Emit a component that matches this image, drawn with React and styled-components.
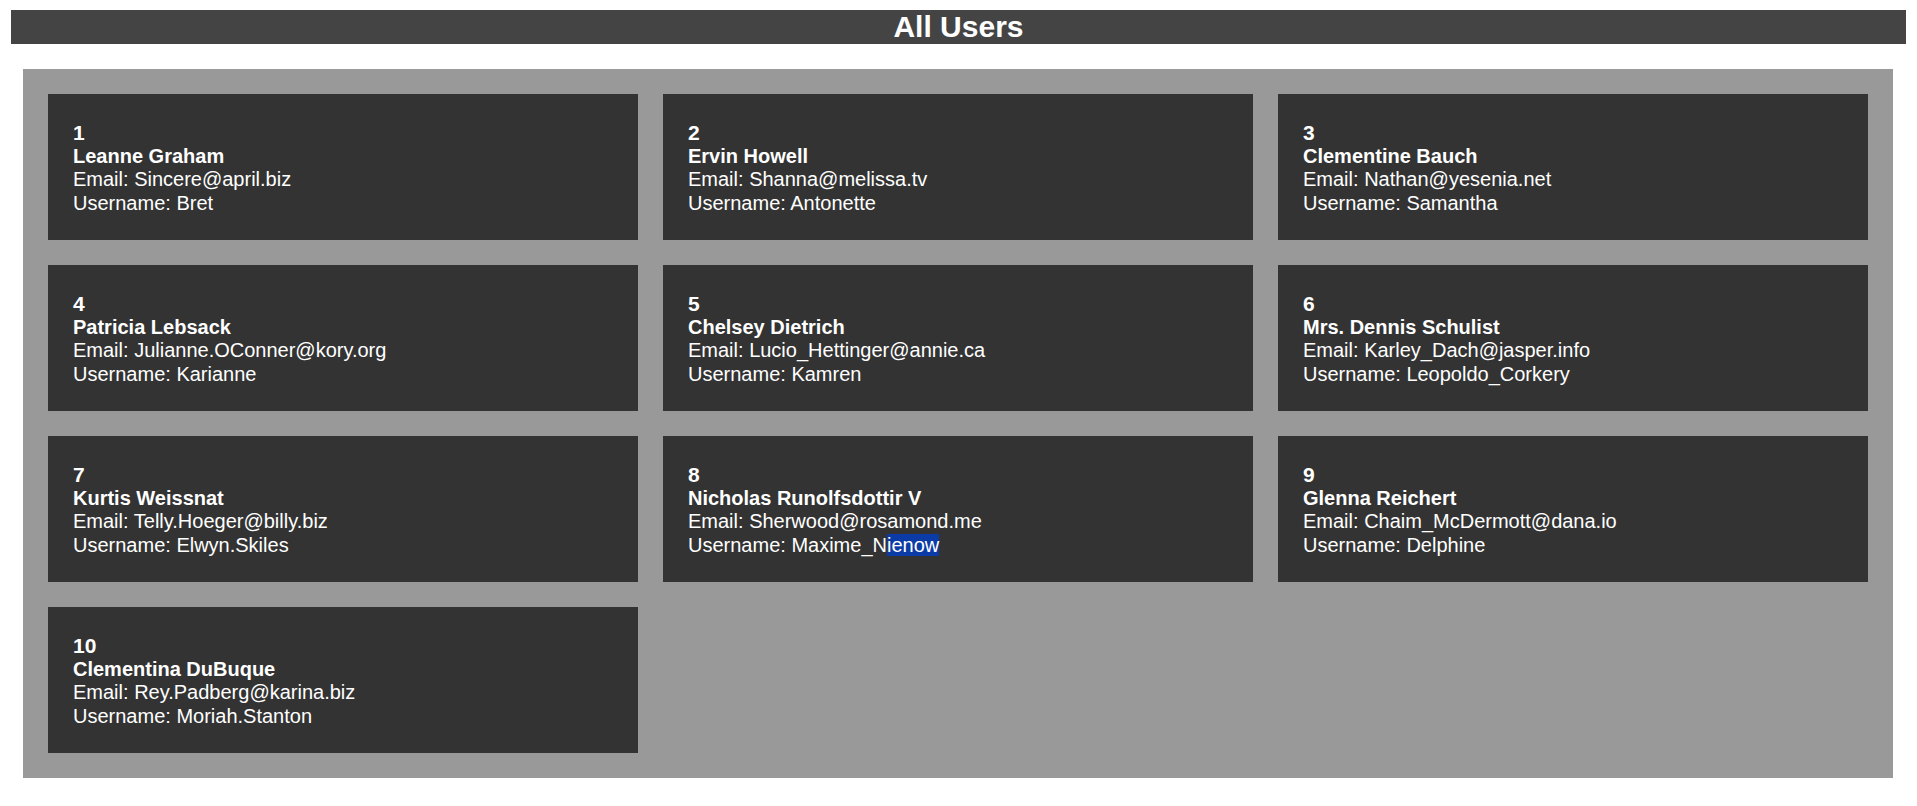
import styled, { createGlobalStyle } from "styled-components";

const users = [
  { id: 1, name: "Leanne Graham", email: "Sincere@april.biz", username: "Bret" },
  { id: 2, name: "Ervin Howell", email: "Shanna@melissa.tv", username: "Antonette" },
  { id: 3, name: "Clementine Bauch", email: "Nathan@yesenia.net", username: "Samantha" },
  { id: 4, name: "Patricia Lebsack", email: "Julianne.OConner@kory.org", username: "Karianne" },
  { id: 5, name: "Chelsey Dietrich", email: "Lucio_Hettinger@annie.ca", username: "Kamren" },
  { id: 6, name: "Mrs. Dennis Schulist", email: "Karley_Dach@jasper.info", username: "Leopoldo_Corkery" },
  { id: 7, name: "Kurtis Weissnat", email: "Telly.Hoeger@billy.biz", username: "Elwyn.Skiles" },
  { id: 8, name: "Nicholas Runolfsdottir V", email: "Sherwood@rosamond.me", username: "Maxime_Nienow", selected: 8 },
  { id: 9, name: "Glenna Reichert", email: "Chaim_McDermott@dana.io", username: "Delphine" },
  { id: 10, name: "Clementina DuBuque", email: "Rey.Padberg@karina.biz", username: "Moriah.Stanton" },
];

const GlobalStyle = createGlobalStyle`
  body {
    margin: 0;
    background: #ffffff;
    font-family: "Liberation Sans", Arial, sans-serif;
  }
`;

const Page = styled.div`
  padding: 10px 11px;
`;

const Title = styled.h1`
  margin: 0;
  height: 34px;
  line-height: 34px;
  background-color: #444444;
  color: #ffffff;
  font-size: 30px;
  font-weight: 700;
  text-align: center;
`;

const Board = styled.div`
  margin: 25px 13px 0 12px;
  padding: 25px;
  background-color: #999999;
  display: grid;
  grid-template-columns: repeat(3, 1fr);
  gap: 25px;
`;

const Card = styled.div`
  background-color: #333333;
  color: #ffffff;
  padding: 27px 25px 25px;
  font-size: 20px;
  line-height: 23.5px;
`;

const Line = styled.div`
  font-size: ${(p) => p.$size || "20px"};
  font-weight: ${(p) => (p.$bold ? 700 : 400)};
  white-space: nowrap;
`;

const Selected = styled.span`
  background-color: #0b3ba7;
`;

const UserCard = ({ user }) => {
  const name = user.username;
  return (
    <Card>
      <Line $bold $size="21px">{user.id}</Line>
      <Line $bold>{user.name}</Line>
      <Line>Email: {user.email}</Line>
      <Line>
        Username:{" "}
        {user.selected ? (
          <>
            {name.slice(0, user.selected)}
            <Selected>{name.slice(user.selected)}</Selected>
          </>
        ) : (
          name
        )}
      </Line>
    </Card>
  );
};

export default function App() {
  return (
    <>
      <GlobalStyle />
      <Page>
        <Title>All Users</Title>
        <Board>
          {users.map((u) => (
            <UserCard key={u.id} user={u} />
          ))}
        </Board>
      </Page>
    </>
  );
}
